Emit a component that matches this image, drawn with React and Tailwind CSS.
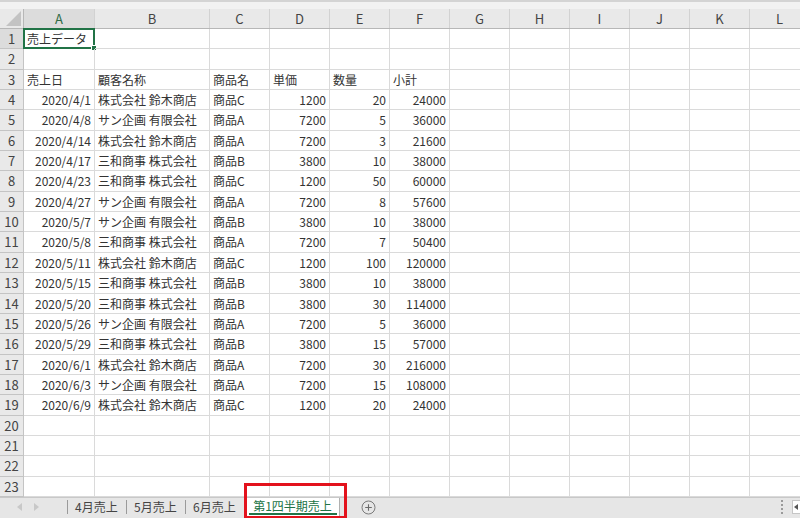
import React from 'react';

const cols = [
  { key: 'A', w: 'w-[71px]' },
  { key: 'B', w: 'w-[115px]' },
  { key: 'C', w: 'w-[60px]' },
  { key: 'D', w: 'w-[60px]' },
  { key: 'E', w: 'w-[60px]' },
  { key: 'F', w: 'w-[60px]' },
  { key: 'G', w: 'w-[60px]' },
  { key: 'H', w: 'w-[60px]' },
  { key: 'I', w: 'w-[60px]' },
  { key: 'J', w: 'w-[60px]' },
  { key: 'K', w: 'w-[60px]' },
  { key: 'L', w: 'w-[60px]' },
];

// row heights (px) so lines land where Excel put them
const heights = [20, 21, 20, 20, 21, 20, 20, 21, 20, 20, 21, 20, 21, 20, 20, 21, 20, 20, 21, 20, 20, 21, 20];

const sales = [
  ['2020/4/1', '株式会社 鈴木商店', '商品C', 1200, 20, 24000],
  ['2020/4/8', 'サン企画 有限会社', '商品A', 7200, 5, 36000],
  ['2020/4/14', '株式会社 鈴木商店', '商品A', 7200, 3, 21600],
  ['2020/4/17', '三和商事 株式会社', '商品B', 3800, 10, 38000],
  ['2020/4/23', '三和商事 株式会社', '商品C', 1200, 50, 60000],
  ['2020/4/27', 'サン企画 有限会社', '商品A', 7200, 8, 57600],
  ['2020/5/7', 'サン企画 有限会社', '商品B', 3800, 10, 38000],
  ['2020/5/8', '三和商事 株式会社', '商品A', 7200, 7, 50400],
  ['2020/5/11', '株式会社 鈴木商店', '商品C', 1200, 100, 120000],
  ['2020/5/15', '三和商事 株式会社', '商品B', 3800, 10, 38000],
  ['2020/5/20', '三和商事 株式会社', '商品B', 3800, 30, 114000],
  ['2020/5/26', 'サン企画 有限会社', '商品A', 7200, 5, 36000],
  ['2020/5/29', '三和商事 株式会社', '商品B', 3800, 15, 57000],
  ['2020/6/1', '株式会社 鈴木商店', '商品A', 7200, 30, 216000],
  ['2020/6/3', 'サン企画 有限会社', '商品A', 7200, 15, 108000],
  ['2020/6/9', '株式会社 鈴木商店', '商品C', 1200, 20, 24000],
];

const rows = [
  ['売上データ'],
  [],
  ['売上日', '顧客名称', '商品名', '単価', '数量', '小計'],
  ...sales,
];

const rightAligned = [0, 3, 4, 5];

const Cell = ({ col, value, rowIndex, colIndex }) => {
  const isNum = rowIndex >= 3 && rightAligned.includes(colIndex);
  const selected = rowIndex === 0 && colIndex === 0;
  return (
    <div
      className={`${col.w} shrink-0 h-full border-r border-b border-[#dadada] flex items-center px-[3px] whitespace-nowrap relative ${
        isNum ? 'justify-end' : 'justify-start'
      }`}
    >
      {value !== undefined && <span className="leading-none">{value}</span>}
      {selected && (
        <div className="absolute -left-px -top-px -right-px -bottom-px border-2 border-[#217346]">
          <div className="absolute -right-[4px] -bottom-[4px] w-[6px] h-[6px] bg-[#217346] border border-white" />
        </div>
      )}
    </div>
  );
};

const App = () => {
  return (
    <div className="w-[800px] h-[518px] overflow-hidden bg-white flex flex-col font-['Noto_Sans_CJK_JP','Noto_Sans',sans-serif] text-[12px] text-[#333] relative">
      {/* strip above headers */}
      <div className="h-[9px] shrink-0 border-t-2 border-[#d4d4d4] bg-[#f2f2f2]" />

      {/* column headers */}
      <div className="h-5 shrink-0 flex bg-[#e9e9e9] border-b border-[#b7b7b7] text-[#444]">
        <div className="w-6 shrink-0 h-full border-r border-[#b7b7b7] relative overflow-hidden">
          <svg className="absolute right-[2px] bottom-[2px]" width="15" height="15" viewBox="0 0 15 15">
            <polygon points="15,0 15,15 0,15" fill="#c3c3c3" />
          </svg>
        </div>
        {cols.map((c, i) => (
          <div
            key={c.key}
            className={`${c.w} shrink-0 h-full border-r border-[#d2d2d2] flex items-center justify-center text-[13px] ${
              i === 0 ? 'bg-[#dcdcdc] text-[#2f6b46]' : ''
            }`}
          >
            {c.key}
          </div>
        ))}
      </div>

      {/* body */}
      {heights.map((h, r) => (
        <div key={r} className={`${h === 21 ? 'h-[21px]' : 'h-5'} shrink-0 flex`}>
          <div
            className={`w-6 shrink-0 h-full border-r border-b border-[#c4c4c4] flex items-center justify-center text-[13px] text-[#444] ${
              r === 0 ? 'bg-[#dcdcdc]' : 'bg-[#e9e9e9]'
            }`}
          >
            {r + 1}
          </div>
          {cols.map((c, ci) => (
            <Cell key={c.key} col={c} colIndex={ci} rowIndex={r} value={rows[r] ? rows[r][ci] : undefined} />
          ))}
        </div>
      ))}

      {/* sheet tabs */}
      <div className="flex-1 flex items-stretch bg-[#e6e6e6] border-t border-[#c8c8c8] text-[12px] text-[#444]">
        <div className="w-[67px] shrink-0 flex items-center pl-[17px] gap-[12px] pb-[2px]">
          <svg width="5" height="8" viewBox="0 0 5 8">
            <polygon points="5,0 5,8 0,4" fill="#c8c8c8" />
          </svg>
          <svg width="5" height="8" viewBox="0 0 5 8">
            <polygon points="0,0 0,8 5,4" fill="#c8c8c8" />
          </svg>
        </div>
        {['4月売上', '5月売上', '6月売上'].map((t, i) => (
          <div key={t} className={`${i === 2 ? 'w-[61px]' : 'w-[59px]'} shrink-0 flex items-center pb-[3px]`}>
            <div className="w-px h-[14px] bg-[#9a9a9a]" />
            <span className="pl-[7px] leading-none">{t}</span>
          </div>
        ))}
        <div className="w-[94px] shrink-0 bg-white border-r border-[#b0b0b0] flex items-start justify-center pt-[2px] relative">
          <span className="leading-none text-[#217346]">第1四半期売上</span>
          <div className="absolute left-[3px] right-[2px] bottom-[3px] h-[2px] bg-[#217346]" />
        </div>
        <div className="w-[21px] shrink-0" />
        <div className="flex items-center pb-[2px]">
          <svg width="15" height="15" viewBox="0 0 15 15">
            <circle cx="7.5" cy="7.5" r="6.5" fill="none" stroke="#7a7a7a" strokeWidth="1" />
            <path d="M7.5 4.2v6.6M4.2 7.5h6.6" stroke="#6a6a6a" strokeWidth="1.1" />
          </svg>
        </div>
        <div className="flex-1" />
        <div className="flex flex-col justify-center gap-[2px] mr-[9px] pb-[2px]">
          <div className="w-[2px] h-[2px] bg-[#9a9a9a]" />
          <div className="w-[2px] h-[2px] bg-[#9a9a9a]" />
          <div className="w-[2px] h-[2px] bg-[#9a9a9a]" />
          <div className="w-[2px] h-[2px] bg-[#9a9a9a]" />
        </div>
        <div className="w-[8px] mt-[2px] mb-[4px] bg-white border border-r-0 border-[#c6c6c6] flex items-center pl-[1px]">
          <svg width="4" height="6" viewBox="0 0 4 6">
            <polygon points="4,0 4,6 0,3" fill="#555" />
          </svg>
        </div>
      </div>

      {/* red annotation box over active tab */}
      <div className="absolute left-[244px] top-[483px] w-[103px] h-[36px] border-[3px] border-[#e3121c] pointer-events-none" />
    </div>
  );
};

export default App;
